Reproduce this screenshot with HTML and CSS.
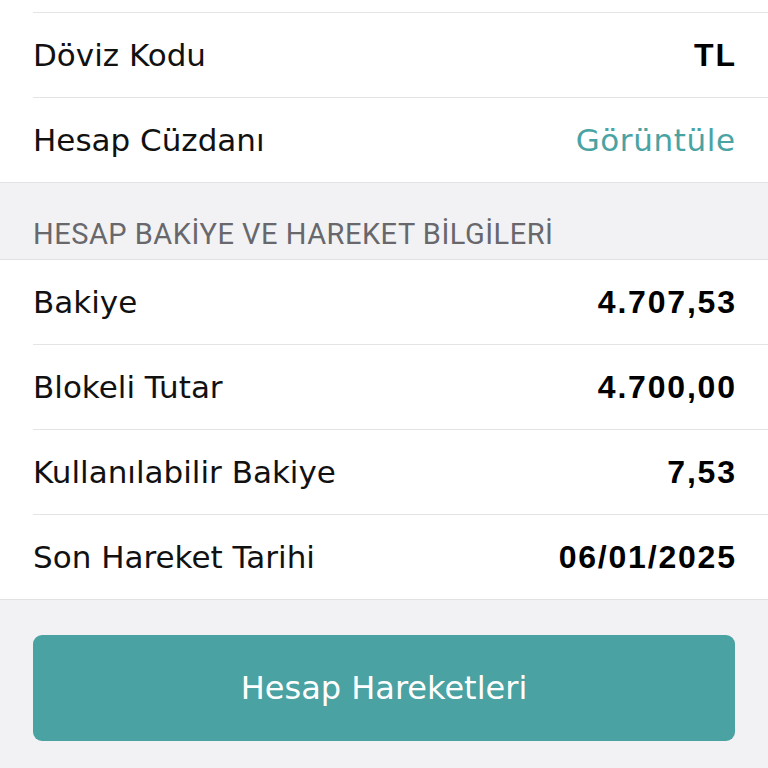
FILE: index.html
```html
<html>
  <head>
    <meta charset="utf-8">
    <link rel="stylesheet" href="styles.css">
    <title>Hesap Detayı</title>
  </head>
  <body>
    <div class="list">
      <div class="row row-cut"></div>
      <div class="row">
        <span class="label">Döviz Kodu</span>
        <span class="value">TL</span>
      </div>
      <div class="row">
        <span class="label">Hesap Cüzdanı</span>
        <a class="link" href="#">Görüntüle</a>
      </div>
    </div>
    <div class="section-header">HESAP BAKİYE VE HAREKET BİLGİLERİ</div>
    <div class="list">
      <div class="row">
        <span class="label">Bakiye</span>
        <span class="value">4.707,53</span>
      </div>
      <div class="row">
        <span class="label">Blokeli Tutar</span>
        <span class="value">4.700,00</span>
      </div>
      <div class="row">
        <span class="label">Kullanılabilir Bakiye</span>
        <span class="value">7,53</span>
      </div>
      <div class="row">
        <span class="label">Son Hareket Tarihi</span>
        <span class="value">06/01/2025</span>
      </div>
    </div>
    <div class="actions">
      <button class="button">Hesap Hareketleri</button>
    </div>
  </body>
</html>
```

FILE: styles.css
```css
html, body {
  margin:      0;
  background:  #F2F2F4;
  font-family: "DejaVu Sans", "Liberation Sans", sans-serif;
  color:       #111111;
}
.list {
  background:    #FFFFFF;
  padding-left:  33px;
  border-bottom: 1px solid #E2E2E4;
}
.row {
  display:         flex;
  align-items:     center;
  justify-content: space-between;
  height:          84px;
  padding-right:   33px;
  border-bottom:   1px solid #E4E4E6;
}
.row:last-child { border-bottom: none; }
.row-cut { height: 12px; }
.label {
  font-size: 31px;
}
.value {
  font-family:    "Liberation Sans", Arial, sans-serif;
  font-size:      32px;
  font-weight:    bold;
  color:          #000000;
  letter-spacing: 1.8px;
  margin-right:   -1.8px;
}
.link {
  font-size:       31px;
  letter-spacing:  0.6px;
  margin-right:    -0.6px;
  color:           #4AA3A3;
  text-decoration: none;
}
.section-header {
  height:         77px;
  box-sizing:     border-box;
  padding:        34px 33px 0;
  font-family:    Roboto, "Liberation Sans", sans-serif;
  font-size:      29px;
  letter-spacing: 0.5px;
  color:          #68686C;
  border-bottom:  1px solid #E2E2E4;
}
.actions {
  padding: 35px 33px 28px;
}
.button {
  display:       block;
  width:         100%;
  height:        106px;
  border:        none;
  border-radius: 9px;
  background:    #4AA2A2;
  color:         #FFFFFF;
  font-family:   "DejaVu Sans", "Liberation Sans", sans-serif;
  font-size:     32px;
}
```
